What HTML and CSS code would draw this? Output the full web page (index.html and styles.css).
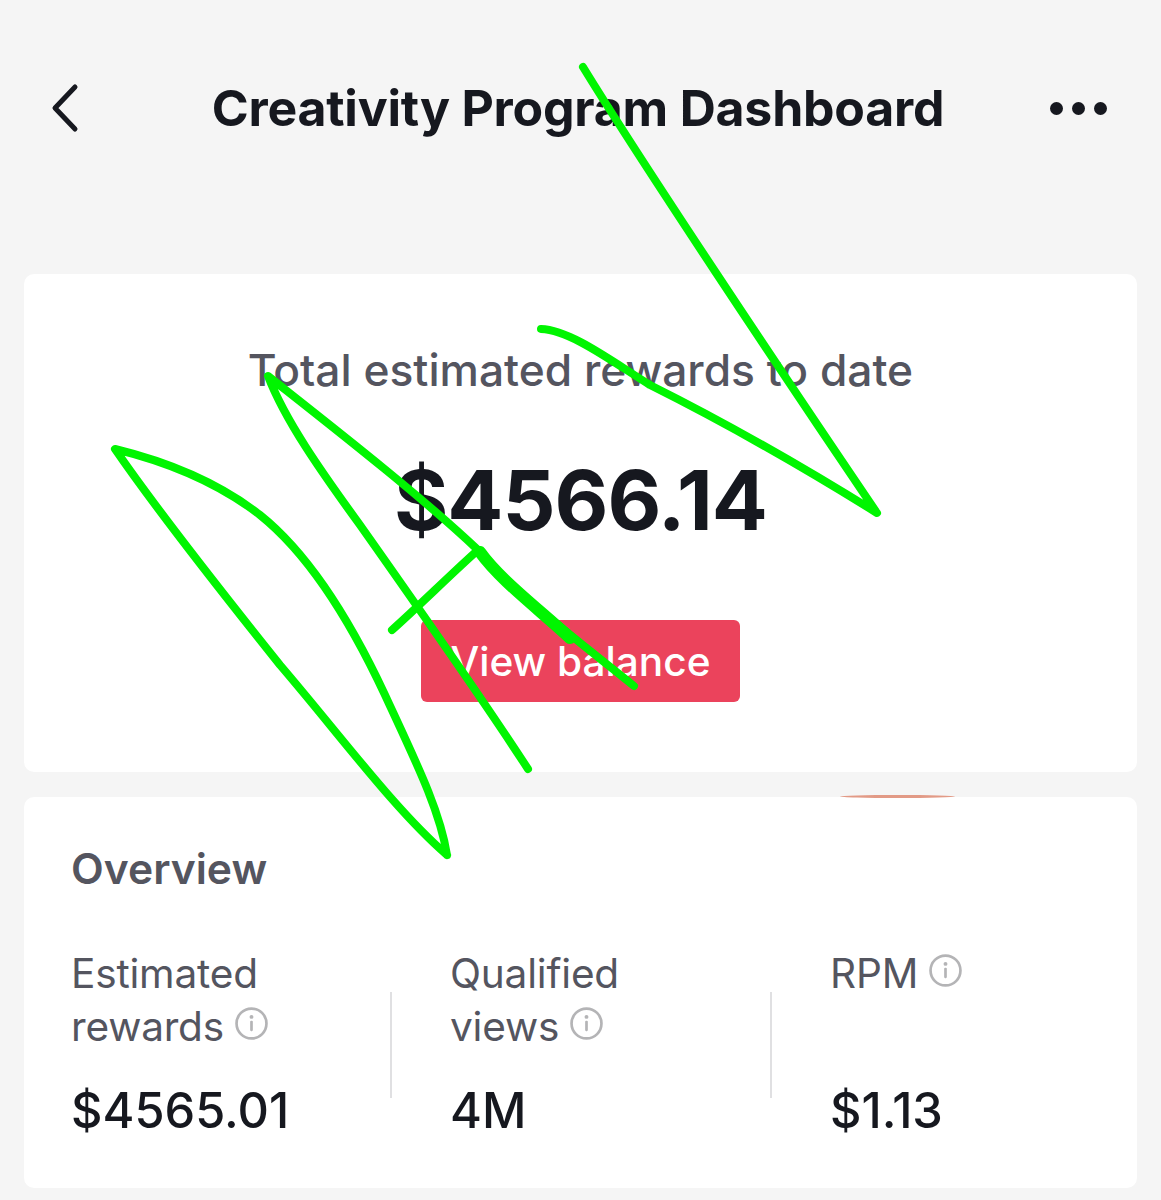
FILE: index.html
```html
<!DOCTYPE html>
<html lang="en">
<head>
  <meta charset="UTF-8">
  <title>Creativity Program Dashboard</title>
  <link rel="stylesheet" href="styles.css">
</head>
<body>
  <div class="page">
    <header class="topbar">
      <svg class="back-icon" viewBox="0 0 32 50" width="32" height="50">
        <path d="M26 4 L6 25 L26 46" />
      </svg>
      <h1>Creativity Program Dashboard</h1>
      <div class="more-icon"><span></span><span></span><span></span></div>
    </header>

    <section class="card total-card">
      <p class="total-label">Total estimated rewards to date</p>
      <p class="total-value">$4566.14</p>
      <button class="balance-btn">View balance</button>
    </section>

    <section class="card overview-card">
      <h2>Overview</h2>
      <div class="stats">
        <div class="stat">
          <p class="stat-label">Estimated<br>rewards <svg class="info-icon" viewBox="0 0 32 32"><use href="#info" /></svg></p>
          <p class="stat-value">$4565.01</p>
        </div>
        <div class="stat">
          <p class="stat-label">Qualified<br>views <svg class="info-icon" viewBox="0 0 32 32"><use href="#info" /></svg></p>
          <p class="stat-value">4M</p>
        </div>
        <div class="stat">
          <p class="stat-label">RPM <svg class="info-icon" viewBox="0 0 32 32"><use href="#info" /></svg></p>
          <p class="stat-value">$1.13</p>
        </div>
      </div>
    </section>
  </div>

  <svg width="0" height="0" class="defs">
    <symbol id="info" viewBox="0 0 32 32">
      <circle cx="16" cy="16" r="14.5" fill="none" stroke="#b4b4b6" stroke-width="2.6" />
      <circle cx="16" cy="9.6" r="1.9" fill="#b4b4b6" />
      <rect x="14.7" y="13.4" width="2.6" height="10" rx="1" fill="#b4b4b6" />
    </symbol>
  </svg>

  <!-- green marker scribble drawn over the screenshot -->
  <svg class="scribble" viewBox="0 0 1161 1200" width="1161" height="1200">
    <path d="M583 67 C640 160 780 370 877 513 C800 465 720 420 650 385 C610 360 570 330 541 329" />
    <path d="M528 769 C480 695 420 610 360 525 C320 470 285 420 268 376 C330 425 420 495 478 550 C510 590 590 650 634 686" />
    <path class="thick" d="M480 552 C500 580 540 610 570 638" />
    <path d="M392 630 C420 605 450 575 478 550" />
    <path d="M447 855 C395 810 340 735 280 665 C220 590 150 500 115 449 C160 460 215 480 260 515 C310 555 350 620 385 695 C415 760 440 810 447 855" />
  </svg>
</body>
</html>
```

FILE: styles.css
```css
* {
  box-sizing: border-box;
}

html, body {
  margin: 0;
  padding: 0;
}

body {
  font-family: Inter, "Liberation Sans", sans-serif;
  background-color: #f5f5f5;
  color: #16181f;
  height: 1200px;
  overflow: hidden;
  position: relative;
}

p, h1, h2 {
  margin: 0;
}

.page {
  padding: 0 24px;
}

.topbar {
  height: 274px;
  padding: 83px 30px 0 25px;
  display: grid;
  grid-template-columns: 1fr auto 1fr;
  align-items: start;
}

.back-icon {
  fill: none;
  stroke: #16181f;
  stroke-width: 5;
  stroke-linecap: round;
  stroke-linejoin: round;
}

.topbar h1 {
  font-size: 50px;
  font-weight: 700;
  line-height: 50px;
  letter-spacing: -0.22px;
  white-space: nowrap;
}

.more-icon {
  display: flex;
  justify-content: flex-end;
  gap: 9px;
  margin-top: 19px;
}

.more-icon span {
  width: 13px;
  height: 13px;
  border-radius: 50%;
  background-color: #16181f;
}

.card {
  background-color: #fff;
  border-radius: 10px;
}

.total-card {
  height: 498px;
  padding-top: 71px;
  margin-bottom: 25px;
  display: flex;
  flex-direction: column;
  align-items: center;
}

.total-label {
  font-size: 44.3px;
  font-weight: 500;
  line-height: 50px;
  color: #54555f;
}

.total-value {
  font-size: 83px;
  font-weight: 700;
  line-height: 90px;
  margin-top: 60px;
  letter-spacing: -1px;
}

.balance-btn {
  width: 319px;
  height: 82px;
  margin-top: 75px;
  background-color: #eb435c;
  color: #fff;
  font-family: inherit;
  font-size: 40.6px;
  font-weight: 500;
  border: none;
  border-radius: 6px;
}

.overview-card {
  height: 391px;
  padding: 47px 47px 0;
  position: relative;
}

/* bit of red bleeding through at the top of the card */
.overview-card::before {
  content: "";
  position: absolute;
  left: 816px;
  top: -2px;
  width: 115px;
  height: 3px;
  border-radius: 50%;
  background-color: #e29a86;
}

.overview-card h2 {
  font-size: 42.6px;
  font-weight: 600;
  line-height: 50px;
  color: #54555f;
}

.stats {
  display: grid;
  grid-template-columns: 379px 380px 1fr;
  margin-top: 53px;
}

.stat {
  position: relative;
}

.stat + .stat::before {
  content: "";
  position: absolute;
  left: -60px;
  top: 45px;
  width: 1.5px;
  height: 106px;
  background-color: #e0e0e2;
}

.stat-label {
  font-size: 40.6px;
  line-height: 53px;
  height: 106px;
  letter-spacing: -0.2px;
  color: #54555f;
}

.info-icon {
  width: 33px;
  height: 33px;
  vertical-align: 1px;
  margin-left: 0;
}

.stat-value {
  font-size: 48.7px;
  font-weight: 500;
  line-height: 60px;
  margin-top: 28px;
}

.defs {
  position: absolute;
}

.scribble {
  position: absolute;
  left: 0;
  top: 0;
  fill: none;
  stroke: #00f500;
  stroke-width: 8;
  stroke-linecap: round;
  stroke-linejoin: round;
}

.scribble .thick {
  stroke-width: 12;
}
```
